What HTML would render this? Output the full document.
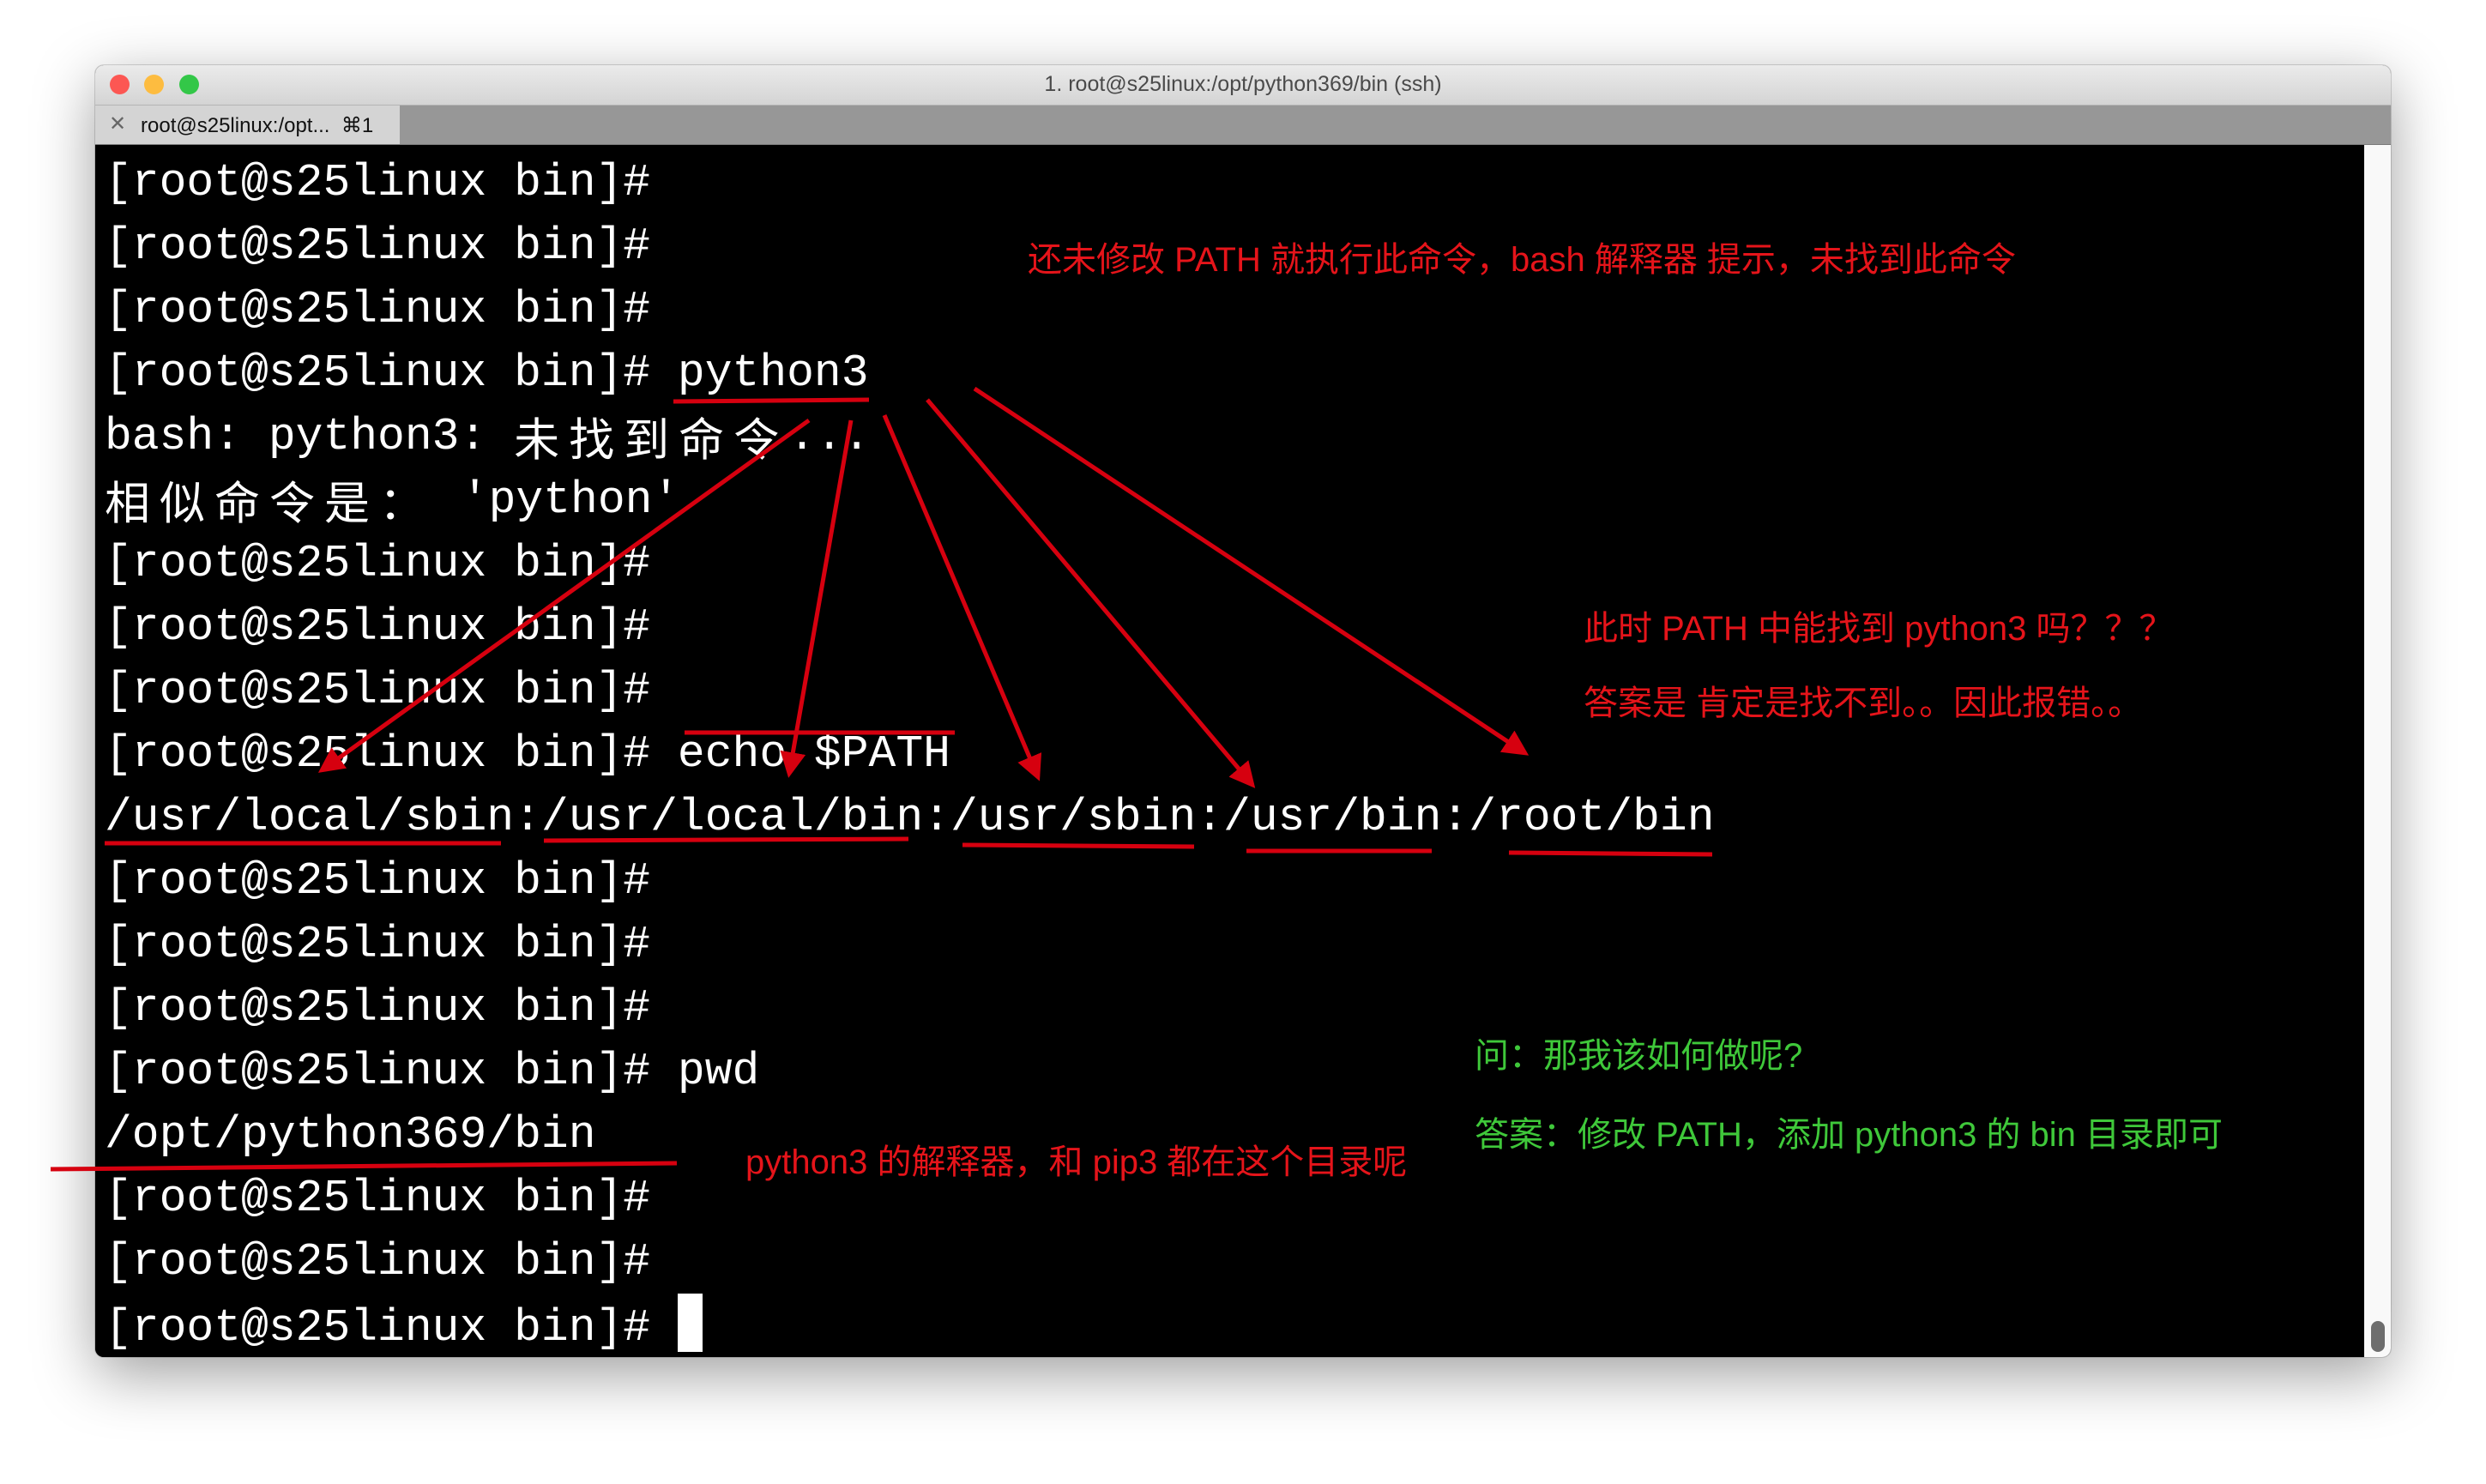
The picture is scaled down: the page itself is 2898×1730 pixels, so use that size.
<!DOCTYPE html>
<html><head><meta charset="utf-8"><style>
html,body{margin:0;padding:0;background:#fff;width:2898px;height:1730px;overflow:hidden;position:relative}
.win{position:absolute;left:111px;top:76px;width:2676px;height:1506px;border-radius:10px;overflow:hidden;box-shadow:0 20px 70px rgba(0,0,0,0.38),0 0 0 1px rgba(0,0,0,0.15);background:#000}
.title{position:absolute;left:0;top:0;width:100%;height:46px;background:linear-gradient(#ebebeb,#d4d4d4);border-bottom:1px solid #b5b5b5}
.title .t{position:absolute;left:0;right:0;top:8px;text-align:center;font:25px "Liberation Sans",sans-serif;color:#4a4a4a}
.dot{position:absolute;top:11px;width:23px;height:23px;border-radius:50%}
.tabs{position:absolute;left:0;top:47px;width:100%;height:45px;background:#979797;border-bottom:1px solid #7a7a7a}
.tab{position:absolute;left:0;top:0;width:355px;height:45px;background:#d4d4d4;font:24px "Liberation Sans",sans-serif;color:#111}
.term{position:absolute;left:0;top:93px;width:2645px;height:1413px;background:#000}
.sb{position:absolute;left:2645px;top:93px;width:31px;height:1413px;background:#f9f9f9}
.thumb{position:absolute;left:8px;top:1371px;width:16px;height:36px;border-radius:8px;background:#6e6e6e}
.l{position:absolute;left:122px;height:74px;font:53px/74px "Liberation Mono",monospace;color:#fff;white-space:pre}
.c{font-family:"Noto Sans CJK SC",sans-serif;display:inline-block;width:64px;text-align:left;line-height:74px;height:74px;vertical-align:top}
.a{position:absolute;font:40px "Liberation Sans","Noto Sans CJK SC",sans-serif;white-space:nowrap}
.r{color:#e5141a}.g{color:#3fc83a}
</style></head><body>
<div class="win">
<div class="title"><div class="dot" style="left:17px;background:#fc5753"></div><div class="dot" style="left:57px;background:#fdbc40"></div><div class="dot" style="left:98px;background:#33c748"></div><div class="t">1. root@s25linux:/opt/python369/bin (ssh)</div></div>
<div class="tabs"><div class="tab"><span style="position:absolute;left:16px;top:7px;color:#666">✕</span><span style="position:absolute;left:53px;top:9px">root@s25linux:/opt...&nbsp;&nbsp;⌘1</span></div></div>
<div class="term"></div>
<div class="sb"><div class="thumb"></div></div>
</div>
<div class="l" style="top:176px">[root@s25linux bin]#</div>
<div class="l" style="top:250px">[root@s25linux bin]#</div>
<div class="l" style="top:324px">[root@s25linux bin]#</div>
<div class="l" style="top:398px">[root@s25linux bin]# python3</div>
<div class="l" style="top:472px">bash: python3: <span class="c">未</span><span class="c">找</span><span class="c">到</span><span class="c">命</span><span class="c">令</span>...</div>
<div class="l" style="top:546px"><span class="c">相</span><span class="c">似</span><span class="c">命</span><span class="c">令</span><span class="c">是</span><span class="c">：</span> 'python'</div>
<div class="l" style="top:620px">[root@s25linux bin]#</div>
<div class="l" style="top:694px">[root@s25linux bin]#</div>
<div class="l" style="top:768px">[root@s25linux bin]#</div>
<div class="l" style="top:842px">[root@s25linux bin]# echo $PATH</div>
<div class="l" style="top:916px">/usr/local/sbin:/usr/local/bin:/usr/sbin:/usr/bin:/root/bin</div>
<div class="l" style="top:990px">[root@s25linux bin]#</div>
<div class="l" style="top:1064px">[root@s25linux bin]#</div>
<div class="l" style="top:1138px">[root@s25linux bin]#</div>
<div class="l" style="top:1212px">[root@s25linux bin]# pwd</div>
<div class="l" style="top:1286px">/opt/python369/bin</div>
<div class="l" style="top:1360px">[root@s25linux bin]#</div>
<div class="l" style="top:1434px">[root@s25linux bin]#</div>
<div class="l" style="top:1508px">[root@s25linux bin]# <span style="display:inline-block;width:29px;height:68px;background:#fff;vertical-align:-14px"></span></div>
<div class="a r" style="left:1198px;top:270px">还未修改 PATH 就执行此命令，bash 解释器 提示，未找到此命令</div>
<div class="a r" style="left:1846px;top:700px">此时 PATH 中能找到 python3 吗？？？</div>
<div class="a r" style="left:1846px;top:787px">答案是 肯定是找不到。。因此报错。。</div>
<div class="a g" style="left:1719px;top:1198px">问：那我该如何做呢?</div>
<div class="a g" style="left:1719px;top:1290px">答案：修改 PATH，添加 python3 的 bin 目录即可</div>
<div class="a r" style="left:869px;top:1322px">python3 的解释器，和 pip3 都在这个目录呢</div>
<svg width="2898" height="1730" style="position:absolute;left:0;top:0">
<defs><marker id="h" markerWidth="6" markerHeight="6" refX="5" refY="3" orient="auto" markerUnits="strokeWidth"><path d="M0,0 L6,3 L0,6 z" fill="#d6000f"/></marker></defs>
<g stroke="#d6000f" stroke-width="5" fill="none">
<line x1="785" y1="468" x2="1013" y2="466"/>
<line x1="122" y1="983" x2="584" y2="983"/>
<line x1="634" y1="980" x2="1059" y2="978"/>
<line x1="1122" y1="985" x2="1392" y2="987"/>
<line x1="1453" y1="992" x2="1669" y2="992"/>
<line x1="1759" y1="994" x2="1996" y2="996"/>
<line x1="798" y1="854" x2="1113" y2="854"/>
<line x1="59" y1="1363" x2="789" y2="1356"/>
<line x1="943" y1="490" x2="375" y2="898" marker-end="url(#h)"/>
<line x1="992" y1="490" x2="920" y2="902" marker-end="url(#h)"/>
<line x1="1031" y1="484" x2="1210" y2="906" marker-end="url(#h)"/>
<line x1="1081" y1="466" x2="1460" y2="915" marker-end="url(#h)"/>
<line x1="1136" y1="453" x2="1778" y2="878" marker-end="url(#h)"/>
</g></svg>
</body></html>
